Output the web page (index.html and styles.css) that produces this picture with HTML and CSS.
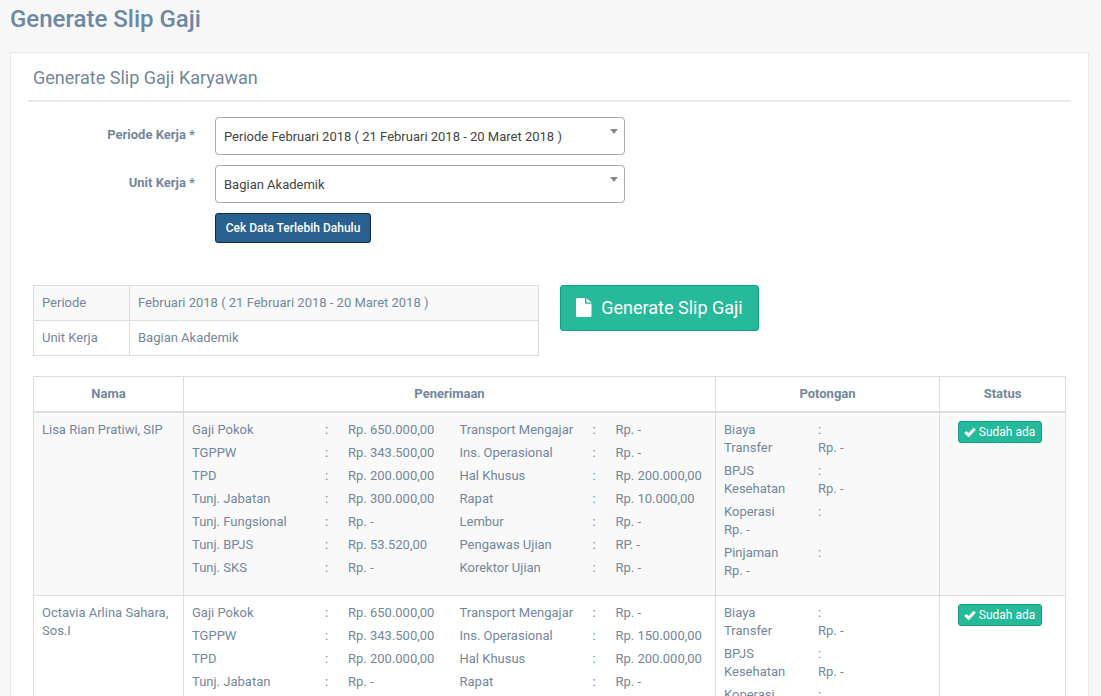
FILE: index.html
```html
<!DOCTYPE html>
<html lang="en">
<head>
    <meta charset="UTF-8">
    <title>Generate Slip Gaji</title>
    <link rel="stylesheet" href="styles.css">
</head>
<body>
    <div class="page">
        <h3 class="page-title">Generate Slip Gaji</h3>
        <div class="panel">
            <div class="panel-title">Generate Slip Gaji Karyawan</div>

            <form class="form">
                <div class="form-row">
                    <label class="form-label">Periode Kerja *</label>
                    <div class="select-box">Periode Februari 2018 ( 21 Februari 2018 - 20 Maret 2018 )</div>
                </div>
                <div class="form-row">
                    <label class="form-label">Unit Kerja *</label>
                    <div class="select-box">Bagian Akademik</div>
                </div>
                <div class="form-row">
                    <span class="form-label"></span>
                    <button type="button" class="btn-check">Cek Data Terlebih Dahulu</button>
                </div>
            </form>

            <div class="summary">
                <table class="info-table">
                    <tr class="odd">
                        <td class="info-key">Periode</td>
                        <td>Februari 2018 ( 21 Februari 2018 - 20 Maret 2018 )</td>
                    </tr>
                    <tr>
                        <td class="info-key">Unit Kerja</td>
                        <td>Bagian Akademik</td>
                    </tr>
                </table>
                <button type="button" class="btn-generate">
                    <svg class="file-icon" viewBox="0 0 16 19" width="16" height="19">
                        <path d="M1.500 0H9v5.800h6.500v11.700a1.500 1.500 0 0 1-1.500 1.500H1.500A1.500 1.500 0 0 1 0 17.500v-16A1.500 1.500 0 0 1 1.500 0zM10.400 0.300l5.300 4.300h-5.300z" fill="#fff"/>
                    </svg>
                    Generate Slip Gaji
                </button>
            </div>

            <table class="slip-table">
                <thead>
                    <tr>
                        <th class="col-name">Nama</th>
                        <th class="col-in">Penerimaan</th>
                        <th class="col-out">Potongan</th>
                        <th>Status</th>
                    </tr>
                </thead>
                <tbody>
                    <tr class="odd">
                        <td>Lisa Rian Pratiwi, SIP</td>
                        <td>
                            <div class="pay-grid">
                                <span>Gaji Pokok</span><span>:</span><span>Rp. 650.000,00</span><span>Transport Mengajar</span><span>:</span><span>Rp. -</span>
                                <span>TGPPW</span><span>:</span><span>Rp. 343.500,00</span><span>Ins. Operasional</span><span>:</span><span>Rp. -</span>
                                <span>TPD</span><span>:</span><span>Rp. 200.000,00</span><span>Hal Khusus</span><span>:</span><span>Rp. 200.000,00</span>
                                <span>Tunj. Jabatan</span><span>:</span><span>Rp. 300.000,00</span><span>Rapat</span><span>:</span><span>Rp. 10.000,00</span>
                                <span>Tunj. Fungsional</span><span>:</span><span>Rp. -</span><span>Lembur</span><span>:</span><span>Rp. -</span>
                                <span>Tunj. BPJS</span><span>:</span><span>Rp. 53.520,00</span><span>Pengawas Ujian</span><span>:</span><span>RP. -</span>
                                <span>Tunj. SKS</span><span>:</span><span>Rp. -</span><span>Korektor Ujian</span><span>:</span><span>Rp. -</span>
                            </div>
                        </td>
                        <td>
                            <div class="cut-grid">
                                <span>Biaya Transfer</span><span>:<br>Rp. -</span>
                                <span>BPJS Kesehatan</span><span>:<br>Rp. -</span>
                                <span>Koperasi<br>Rp. -</span><span>:</span>
                                <span>Pinjaman<br>Rp. -</span><span>:</span>
                            </div>
                        </td>
                        <td class="col-status">
                            <span class="badge"><svg class="check-icon" viewBox="0 0 12 10" width="12" height="10"><path d="M1.300 5l3.300 3.200 6.100-6.500" fill="none" stroke="#fff" stroke-width="3"/></svg> Sudah ada</span>
                        </td>
                    </tr>
                    <tr>
                        <td>Octavia Arlina Sahara, Sos.I</td>
                        <td>
                            <div class="pay-grid">
                                <span>Gaji Pokok</span><span>:</span><span>Rp. 650.000,00</span><span>Transport Mengajar</span><span>:</span><span>Rp. -</span>
                                <span>TGPPW</span><span>:</span><span>Rp. 343.500,00</span><span>Ins. Operasional</span><span>:</span><span>Rp. 150.000,00</span>
                                <span>TPD</span><span>:</span><span>Rp. 200.000,00</span><span>Hal Khusus</span><span>:</span><span>Rp. 200.000,00</span>
                                <span>Tunj. Jabatan</span><span>:</span><span>Rp. -</span><span>Rapat</span><span>:</span><span>Rp. -</span>
                            </div>
                        </td>
                        <td>
                            <div class="cut-grid">
                                <span>Biaya Transfer</span><span>:<br>Rp. -</span>
                                <span>BPJS Kesehatan</span><span>:<br>Rp. -</span>
                                <span>Koperasi</span><span>:</span>
                            </div>
                        </td>
                        <td class="col-status">
                            <span class="badge"><svg class="check-icon" viewBox="0 0 12 10" width="12" height="10"><path d="M1.300 5l3.300 3.200 6.100-6.500" fill="none" stroke="#fff" stroke-width="3"/></svg> Sudah ada</span>
                        </td>
                    </tr>
                </tbody>
            </table>
        </div>
    </div>
</body>
</html>
```
FILE: styles.css
```css
* {
    box-sizing: border-box;
}
html, body {
    margin: 0;
    padding: 0;
    height: 100%;
    overflow: hidden;
}
body {
    background-color: #f7f7f7;
    font-family: Roboto, "Open Sans", sans-serif;
    font-size: 13px;
    line-height: 18px;
    color: #73879c;
}
.page {
    height: 696px;
    overflow: hidden;
    padding: 0 12px 0 10px;
}
.page-title {
    margin: 0;
    padding-top: 5px;
    height: 52px;
    font-size: 24px;
    line-height: 29px;
    font-weight: 500;
    color: #6d87a5;
}
.panel {
    background-color: #fff;
    border: 1px solid #e6e9ed;
    padding: 10px 17px;
    min-height: 700px;
}
.panel-title {
    border-bottom: 2px solid #e6e9ed;
    padding: 4px 5px 10px;
    height: 39px;
    font-size: 18px;
    line-height: 22px;
    color: #73879c;
}

/* form */
.form {
    padding-top: 15px;
}
.form-row {
    display: flex;
    margin-bottom: 10px;
}
.form-label {
    width: 167px;
    margin-right: 20px;
    padding-top: 9px;
    text-align: right;
    font-weight: 700;
}
.select-box {
    position: relative;
    width: 410px;
    height: 38px;
    padding: 10px 8px;
    background-color: #fff;
    border: 1px solid #aaa;
    border-radius: 4px;
    color: #444;
}
.select-box::after {
    content: "";
    position: absolute;
    top: 11px;
    right: 6px;
    border-style: solid;
    border-width: 5px 4px 0;
    border-color: #888 transparent transparent;
}
.btn-check {
    width: 156px;
    height: 30px;
    padding: 0;
    background-color: #286090;
    border: 1px solid #122b40;
    border-radius: 3px;
    color: #fff;
    font-family: inherit;
    font-size: 12px;
    font-weight: 500;
}

/* summary */
.summary {
    display: flex;
    align-items: flex-start;
    margin: 42px 0 20px 5px;
}
.info-table {
    width: 506px;
    border-collapse: collapse;
}
.info-table td {
    height: 35px;
    padding: 8px;
    border: 1px solid #ddd;
}
.info-key {
    width: 96px;
}
.odd {
    background-color: #f9f9f9;
}
.btn-generate {
    display: flex;
    align-items: center;
    justify-content: center;
    gap: 9px;
    width: 199px;
    height: 46px;
    margin-left: 21px;
    padding: 0 0 2px;
    background-color: #26b99a;
    border: 1px solid #169f85;
    border-radius: 3px;
    color: #fff;
    font-family: inherit;
    font-size: 18px;
}

/* main table */
.slip-table {
    width: 1033px;
    margin-left: 5px;
    border-collapse: collapse;
    table-layout: fixed;
}
.slip-table th,
.slip-table td {
    border: 1px solid #ddd;
    padding: 8px;
    vertical-align: top;
    text-align: left;
}
.slip-table th {
    height: 35px;
    border-bottom-width: 2px;
    text-align: center;
    font-weight: 700;
}
.col-name {
    width: 150px;
}
.col-in {
    width: 532px;
}
.col-out {
    width: 224px;
}
.pay-grid {
    display: grid;
    grid-template-columns: 133px 23px 111.5px 133px 23px auto;
    grid-auto-rows: 23px;
    white-space: nowrap;
}
.cut-grid {
    display: grid;
    grid-template-columns: 94px auto;
    row-gap: 5px;
    padding-bottom: 7px;
}
.cut-grid span:nth-child(odd) {
    padding-right: 14px;
}
.slip-table .col-status {
    text-align: center;
}
.badge {
    display: inline-block;
    width: 84px;
    height: 22px;
    margin-right: 6px;
    background-color: #26b99a;
    border: 1px solid #169f85;
    border-radius: 3px;
    color: #fff;
    font-size: 12px;
    line-height: 20px;
    white-space: nowrap;
}
.check-icon {
    vertical-align: -1px;
}
```
